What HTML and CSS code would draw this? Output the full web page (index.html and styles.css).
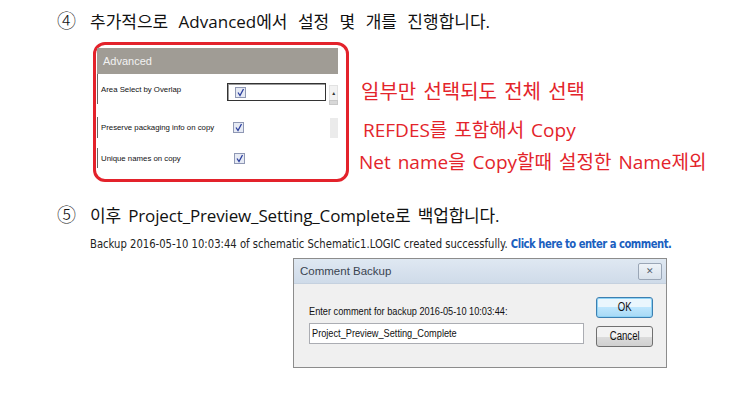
FILE: index.html
```html
<html>

<head>
    <link rel="stylesheet" href="styles.css">
</head>

<body>

    <div class="step">
        <span class="num">④</span><span class="txt">추가적으로 Advanced에서 설정 몇 개를 진행합니다.</span>
    </div>

    <div class="panelRow">
        <div class="redBox">
            <div class="advHead">Advanced</div>
            <div class="optRow first">
                <span class="label">Area Select by Overlap</span>
                <span class="valBox"><span class="chk"><svg width="9" height="9" viewBox="0 0 9 9"><path d="M2 4.5 L4 7.5 L7.5 1" fill="none" stroke="#2b3f9e" stroke-width="1.3"/></svg></span></span>
                <span class="scroll"><span class="arrow">▲</span><span class="thumb"></span></span>
            </div>
            <div class="optRow second">
                <span class="label">Preserve packaging info on copy</span>
                <span class="chk"><svg width="9" height="9" viewBox="0 0 9 9"><path d="M2 4.5 L4 7.5 L7.5 1" fill="none" stroke="#2b3f9e" stroke-width="1.3"/></svg></span>
                <span class="track"></span>
            </div>
            <div class="optRow third">
                <span class="label">Unique names on copy</span>
                <span class="chk"><svg width="9" height="9" viewBox="0 0 9 9"><path d="M2 4.5 L4 7.5 L7.5 1" fill="none" stroke="#2b3f9e" stroke-width="1.3"/></svg></span>
            </div>
        </div>
        <div class="notes">
            <div class="note n1">일부만 선택되도 전체 선택</div>
            <div class="note n2">REFDES를 포함해서 Copy</div>
            <div class="note n3">Net name을 Copy할때 설정한 Name제외</div>
        </div>
    </div>

    <div class="step step2">
        <span class="num">⑤</span><span class="txt">이후 Project_Preview_Setting_Complete로 백업합니다.</span>
    </div>

    <div class="backupMsg"><span class="squeeze">Backup 2016-05-10 10:03:44 of schematic Schematic1.LOGIC created successfully. <a class="link">Click here to enter a comment.</a></span></div>

    <div class="dialog">
        <div class="titleBar">
            <span class="title">Comment Backup</span>
            <span class="closeBtn">✕</span>
        </div>
        <div class="dlgBody">
            <div class="dlgLeft">
                <div class="prompt"><span class="squeeze">Enter comment for backup 2016-05-10 10:03:44:</span></div>
                <div class="comment"><span class="squeeze">Project_Preview_Setting_Complete</span></div>
            </div>
            <div class="dlgBtns">
                <span class="btn ok"><span class="squeeze">OK</span></span>
                <span class="btn"><span class="squeeze">Cancel</span></span>
            </div>
        </div>
    </div>

</body>

</html>
```

FILE: styles.css
```css
body {
    margin: 0;
    background: #fff;
    font-family: "Open Sans", "Noto Sans CJK KR", sans-serif;
    color: #111;
}

.squeeze {
    display: inline-block;
    white-space: nowrap;
    transform: scaleX(0.8);
    transform-origin: left center;
}

/* 단계 제목 */
.step {
    padding: 8px 0 0 57px;
    height: 24px;
    line-height: 24px;
    font-size: 17px;
    word-spacing: 6px;
    white-space: nowrap;
}

.step .num {
    display: inline-block;
    width: 33px;
    font-family: "Noto Sans CJK KR", sans-serif;
    font-size: 19px;
    font-weight: 300;
    word-spacing: 0;
}

.step2 {
    margin-top: 12px;
    word-spacing: 3px;
    letter-spacing: -0.15px;
}

/* Advanced 패널 */
.panelRow {
    display: flex;
    margin: 10px 0 0 93px;
}

.redBox {
    width: 241px;
    height: 131px;
    border: 3px solid #e3222b;
    border-radius: 12px;
    padding: 3px 8px 0 1px;
    font-family: "Liberation Sans", Arial, sans-serif;
    font-size: 7.8px;
    color: #111;
}

.advHead {
    height: 26px;
    line-height: 26px;
    background: #a09c95;
    color: #f2f2f2;
    font-size: 11px;
    padding-left: 6px;
}

.optRow {
    display: flex;
    align-items: center;
    border-left: 1px solid #666;
}

.optRow .label {
    width: 130px;
    padding-left: 3px;
}

.optRow.first {
    height: 30px;
    align-items: flex-start;
}

.optRow.first .label {
    padding-top: 11px;
}

.valBox {
    width: 96px;
    height: 16px;
    margin-top: 9px;
    border: 1px solid #333;
    box-shadow: inset 1px 1px 0 #999;
    display: flex;
    align-items: center;
    padding-left: 4px;
}

.scroll {
    margin: 11px 0 0 3px;
    width: 9px;
    display: flex;
    flex-direction: column;
}

.scroll .arrow {
    height: 14px;
    font-size: 5px;
    line-height: 14px;
    text-align: center;
    color: #333;
    background: #f2f2f2;
    border: 1px solid #e2e2e2;
    border-bottom: 0;
}

.scroll .thumb {
    height: 3px;
    background: #d8d8d8;
    border: 1px solid #c8c8c8;
}

.optRow.second {
    height: 21px;
    margin-top: 13px;
}

.optRow.third {
    height: 20px;
    margin-top: 10px;
}

.chk {
    display: inline-flex;
    width: 9px;
    height: 9px;
    border: 1px solid #8f98b4;
    background: #e6eaf4;
}

.optRow .chk {
    margin-left: 3px;
}

.track {
    width: 8px;
    height: 20px;
    margin-left: 86px;
    background: #ebebeb;
}

/* 빨간 설명 */
.notes {
    margin-left: 10px;
    padding-top: 35px;
    color: #e3242b;
    word-spacing: 2px;
}

.note {
    height: 30px;
    line-height: 30px;
    white-space: nowrap;
}

.n1 {
    font-size: 20px;
    padding-left: 2px;
}

.n2 {
    font-size: 19px;
    margin-top: 8px;
    padding-left: 4px;
}

.n3 {
    font-size: 19px;
    margin-top: 2px;
}

/* 백업 메시지 */
.backupMsg {
    margin: 10px 0 0 90px;
    height: 16px;
    line-height: 16px;
    font-family: "DejaVu Sans", Tahoma, sans-serif;
    font-size: 12px;
    color: #222;
}

.backupMsg .squeeze {
    transform: scaleX(0.837);
}

.backupMsg .link {
    color: #1b5fbf;
    font-weight: bold;
    letter-spacing: -0.6px;
}

/* Comment Backup 대화상자 */
.dialog {
    margin: 6px 0 0 293px;
    width: 372px;
    height: 108px;
    border: 1px solid #8c8c8c;
    background: #f0f0f0;
    font-family: "Liberation Sans", Arial, sans-serif;
}

.titleBar {
    height: 24px;
    display: flex;
    align-items: center;
    justify-content: space-between;
    background: linear-gradient(#dfe8f2, #cfdbe9);
    border-bottom: 1px solid #c5d1df;
    padding: 0 4px 0 6px;
}

.title {
    font-size: 11.5px;
    color: #3a4450;
}

.closeBtn {
    width: 22px;
    height: 15px;
    border: 1px solid #9aa6b6;
    border-radius: 2px;
    background: linear-gradient(#eef3f8, #d9e2ec);
    font-size: 9px;
    line-height: 15px;
    text-align: center;
    color: #55606c;
}

.dlgBody {
    display: flex;
    padding: 13px 12px 0 15px;
}

.dlgLeft {
    width: 275px;
    padding-top: 3px;
}

.prompt {
    font-size: 11.5px;
    height: 22px;
    line-height: 22px;
    color: #111;
}

.comment {
    height: 19px;
    line-height: 19px;
    margin-top: 1px;
    border: 1px solid #abadb3;
    background: #fff;
    font-size: 11.5px;
    padding-left: 2px;
}

.dlgBtns {
    margin-left: 12px;
    display: flex;
    flex-direction: column;
    gap: 8px;
}

.btn {
    width: 55px;
    height: 19px;
    line-height: 19px;
    border: 1px solid #707070;
    border-radius: 3px;
    background: linear-gradient(#f2f2f2 50%, #dcdcdc 50%, #d0d0d0);
    font-size: 12px;
    text-align: center;
    color: #111;
}

.btn .squeeze {
    transform-origin: center;
}

.btn.ok {
    border-color: #3c7fb1;
    background: linear-gradient(#eaf6fd 50%, #bee6fd 50%, #a7d9f5);
    box-shadow: inset 0 0 0 1px #8fd3f5;
}
```
